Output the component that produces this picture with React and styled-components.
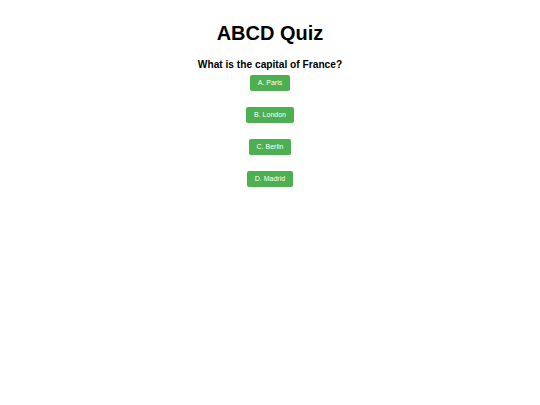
import React from 'react';
import styled, { createGlobalStyle } from 'styled-components';

const GlobalStyle = createGlobalStyle`
  body {
    margin: 0;
    background: #ffffff;
    font-family: "Liberation Sans", Arial, sans-serif;
  }
`;

const options = ['A. Paris', 'B. London', 'C. Berlin', 'D. Madrid'];

const App = () => {
  return (
    <>
      <GlobalStyle />
      <Container>
        <Title>ABCD Quiz</Title>
        <Question>What is the capital of France?</Question>
        <Options>
          {options.map((opt) => (
            <Button key={opt}>{opt}</Button>
          ))}
        </Options>
      </Container>
    </>
  );
};

export default App;

const Container = styled.div`
  display: flex;
  flex-direction: column;
  align-items: center;
  padding-top: 20px;
`;

const Title = styled.h1`
  margin: 0;
  font-size: 20px;
  line-height: 26px;
  font-weight: bold;
  color: #000;
`;

const Question = styled.h2`
  margin: 12px 0 0;
  font-size: 10.2px;
  line-height: 14px;
  font-weight: bold;
  color: #000;
`;

const Options = styled.div`
  display: flex;
  flex-direction: column;
  align-items: center;
  gap: 16px;
  margin-top: 3px;
`;

const Button = styled.button`
  background-color: #4caf50;
  color: white;
  font-family: "Liberation Sans", Arial, sans-serif;
  font-size: 7px;
  line-height: 8px;
  padding: 4px 8px;
  border: none;
  border-radius: 2px;
  cursor: pointer;
`;
